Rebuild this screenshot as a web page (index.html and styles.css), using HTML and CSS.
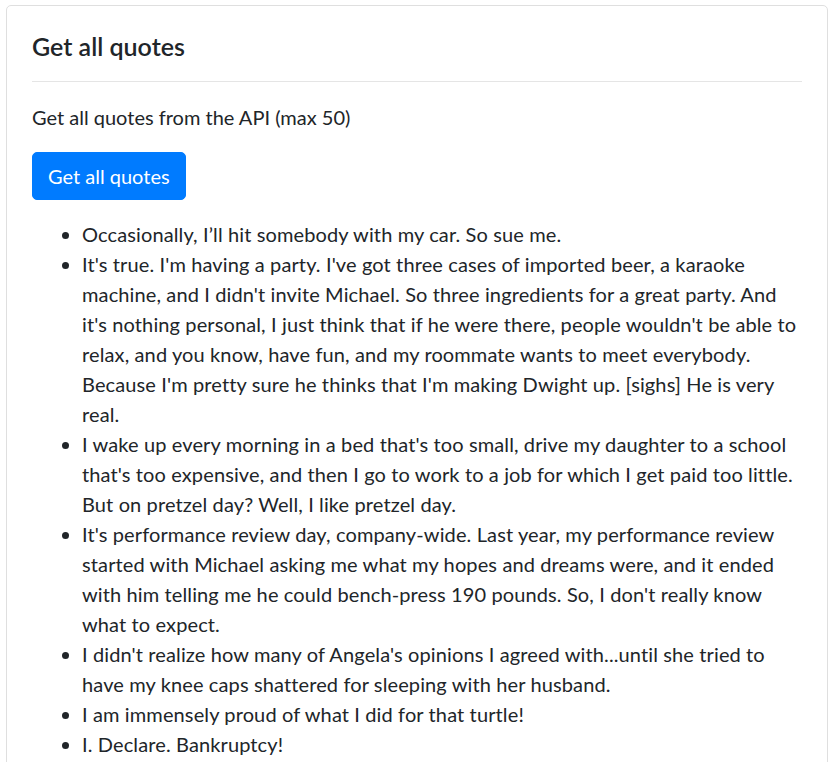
FILE: index.html
```html
<!DOCTYPE html>
<html lang="en">
<head>
<meta charset="utf-8">
<title>Get all quotes</title>
<link rel="stylesheet" href="styles.css">
</head>
<body>
<div class="card">
  <div class="card-body">
    <h5 class="card-title">Get all quotes</h5>
    <hr class="divider">
    <p class="card-text">Get all quotes from the API (max 50)</p>
    <button class="btn btn-primary" type="button">Get all quotes</button>
    <ul class="quotes">
      <li>Occasionally, I’ll hit somebody with my car. So sue me.</li>
      <li>It's true. I'm having a party. I've got three cases of imported beer, a karaoke machine, and I didn't invite Michael. So three ingredients for a great party. And it's nothing personal, I just think that if he were there, people wouldn't be able to relax, and you know, have fun, and my roommate wants to meet everybody. Because I'm pretty sure he thinks that I'm making Dwight up. [sighs] He is very real.</li>
      <li>I wake up every morning in a bed that's too small, drive my daughter to a school that's too expensive, and then I go to work to a job for which I get paid too little. But on pretzel day? Well, I like pretzel day.</li>
      <li>It's performance review day, company-wide. Last year, my performance review started with Michael asking me what my hopes and dreams were, and it ended with him telling me he could bench-press 190 pounds. So, I don't really know what to expect.</li>
      <li>I didn't realize how many of Angela's opinions I agreed with...until she tried to have my knee caps shattered for sleeping with her husband.</li>
      <li>I am immensely proud of what I did for that turtle!</li>
      <li>I. Declare. Bankruptcy!</li>
    </ul>
  </div>
</div>
</body>
</html>
```
FILE: styles.css
```css
* { box-sizing: border-box; }
body {
  margin: 0;
  padding: 5px 5px 0 6px;
  font-family: "Lato", "Segoe UI", sans-serif;
  font-size: 20px;
  line-height: 30px;
  color: #212529;
  background: #fff;
}
.card {
  border: 1px solid #dfdfdf;
  border-radius: 5px;
  background: #fff;
}
.card-body {
  padding: 25px 25px 20px;
}
.card-title {
  margin: 0;
  font-size: 25px;
  line-height: 30px;
  font-weight: 600;
}
.divider {
  margin: 20px 0;
  border: 0;
  border-top: 1px solid #e5e5e5;
}
.card-text {
  margin: 0 0 20px;
}
.btn {
  display: inline-block;
  font-family: inherit;
  font-size: 20px;
  line-height: 30px;
  padding: 8px 15px;
  border: 1px solid #007bff;
  border-radius: 5px;
  background: #007bff;
  color: #fff;
  cursor: pointer;
}
.quotes {
  margin: 19px 0 0;
  padding-left: 50px;
  letter-spacing: 0.12px;
}
```
